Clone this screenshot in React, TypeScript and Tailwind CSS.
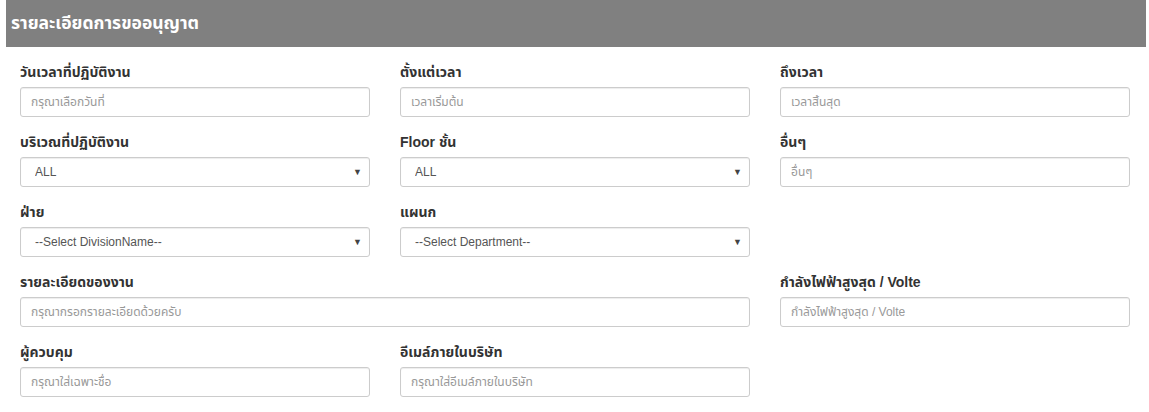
import type { ReactNode } from "react";

const FONT = "[font-family:'Liberation_Sans',Tahoma,'Noto_Sans_Thai',Arial,sans-serif]";

function Label({ children }: { children: ReactNode }) {
  return (
    <label className="mb-[5px] block h-[20px] text-[14px] leading-[20px] font-bold text-[#333]">
      {children}
    </label>
  );
}

function TextField({ label, placeholder, wide }: { label: string; placeholder: string; wide?: boolean }) {
  return (
    <div className={`mb-[15px] ${wide ? "col-span-2" : ""}`}>
      <Label>{label}</Label>
      <input
        type="text"
        placeholder={placeholder}
        className="block h-[30px] w-full rounded-[3px] border border-[#ccc] bg-white px-[10px] text-[12px] text-[#555] shadow-[inset_0_1px_1px_rgba(0,0,0,0.075)] outline-none placeholder:text-[#999]"
      />
    </div>
  );
}

function SelectField({ label, value }: { label: string; value: string }) {
  return (
    <div className="mb-[15px]">
      <Label>{label}</Label>
      <div className="relative">
        <select
          defaultValue={value}
          className="block h-[30px] w-full appearance-none rounded-[3px] border border-[#ccc] bg-white pl-[14px] pr-[24px] text-[12px] text-[#555] shadow-[inset_0_1px_1px_rgba(0,0,0,0.075)] outline-none"
        >
          <option value={value}>{value}</option>
        </select>
        <span className="pointer-events-none absolute top-[9px] right-[8px] text-[9px] leading-[12px] text-[#444]">
          ▼
        </span>
      </div>
    </div>
  );
}

function Empty() {
  return <div />;
}

export default function App() {
  return (
    <div className={`min-h-[412px] w-[1149px] bg-white ${FONT}`}>
      <div className="ml-[6px] flex h-[47px] w-[1140px] items-center bg-[#808080] pl-[5px]">
        <h3 className="text-[17.5px] font-bold text-white">รายละเอียดการขออนุญาต</h3>
      </div>
      <div className="grid grid-cols-[350px_350px_350px] gap-x-[30px] pt-[15px] pl-[20px]">
        <TextField label="วันเวลาที่ปฏิบัติงาน" placeholder="กรุณาเลือกวันที่" />
        <TextField label="ตั้งแต่เวลา" placeholder="เวลาเริ่มต้น" />
        <TextField label="ถึงเวลา" placeholder="เวลาสิ้นสุด" />

        <SelectField label="บริเวณที่ปฏิบัติงาน" value="ALL" />
        <SelectField label="Floor ชั้น" value="ALL" />
        <TextField label="อื่นๆ" placeholder="อื่นๆ" />

        <SelectField label="ฝ่าย" value="--Select DivisionName--" />
        <SelectField label="แผนก" value="--Select Department--" />
        <Empty />

        <TextField label="รายละเอียดของงาน" placeholder="กรุณากรอกรายละเอียดด้วยครับ" wide />
        <TextField label="กำลังไฟฟ้าสูงสุด / Volte" placeholder="กำลังไฟฟ้าสูงสุด / Volte" />

        <TextField label="ผู้ควบคุม" placeholder="กรุณาใส่เฉพาะชื่อ" />
        <TextField label="อีเมล์ภายในบริษัท" placeholder="กรุณาใส่อีเมล์ภายในบริษัท" />
        <Empty />
      </div>
    </div>
  );
}
